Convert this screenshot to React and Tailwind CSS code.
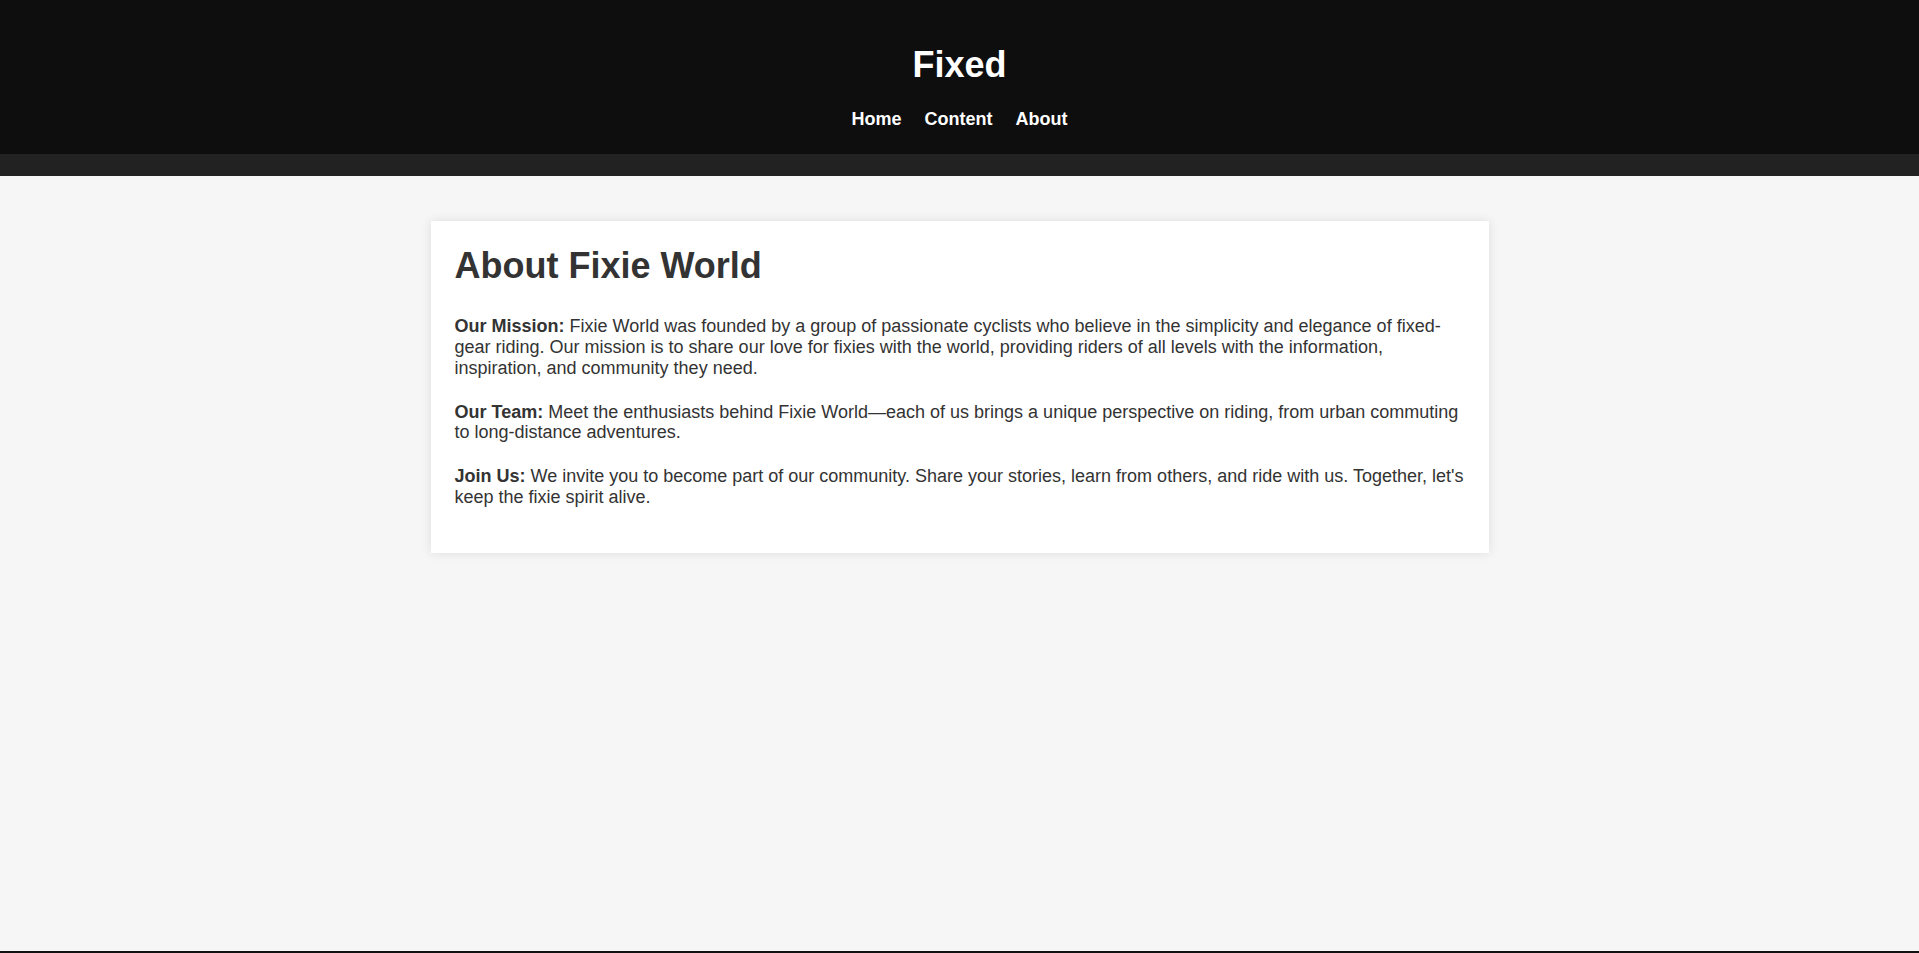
import React from 'react';

// Page "About" du site Fixed : en-tête sombre, bandeau, carte de contenu centrée
const navLinks = ['Home', 'Content', 'About'];

function Header() {
    return (
        <header className="bg-[#0e0e0e] text-white">
            <div className="pt-[44px] pb-[24px] flex flex-col items-center">
                <h1 className="text-[36px] font-bold leading-[1.15] mb-[24px]">Fixed</h1>
                <nav className="flex items-center gap-[23px]">
                    {navLinks.map((link) => (
                        <a key={link} href="#" className="text-[18px] font-bold leading-[1.15] text-white">
                            {link}
                        </a>
                    ))}
                </nav>
            </div>
            <div className="h-[22px] bg-[#222222]" />
        </header>
    );
}

export default function App() {
    return (
        <div className="bg-[#f6f6f6] text-[#333333]" style={{ fontFamily: '"Liberation Sans", Arial, sans-serif' }}>
            <div className="min-h-[951px] flex flex-col">
                <Header />
                <main className="flex-1">
                    <section className="w-[1058px] mx-auto mt-[45px] bg-white px-[24px] pt-[24px] pb-[23px] shadow-[0_0_10px_rgba(0,0,0,0.1)]">
                        <h2 className="text-[36px] font-bold leading-[1.15] mb-[30px]">About Fixie World</h2>
                        <p className="text-[18px] leading-[1.15] mb-[23px]">
                            <strong>Our Mission:</strong> Fixie World was founded by a group of passionate cyclists who believe in the simplicity and elegance of fixed-gear riding. Our mission is to share our love for fixies with the world, providing riders of all levels with the information, inspiration, and community they need.
                        </p>
                        <p className="text-[18px] leading-[1.15] mb-[23px]">
                            <strong>Our Team:</strong> Meet the enthusiasts behind Fixie World—each of us brings a unique perspective on riding, from urban commuting to long-distance adventures.
                        </p>
                        <p className="text-[18px] leading-[1.15] mb-[23px]">
                            <strong>Join Us:</strong> We invite you to become part of our community. Share your stories, learn from others, and ride with us. Together, let's keep the fixie spirit alive.
                        </p>
                    </section>
                </main>
            </div>
            <footer className="h-[40px] bg-[#111111]" />
        </div>
    );
}
